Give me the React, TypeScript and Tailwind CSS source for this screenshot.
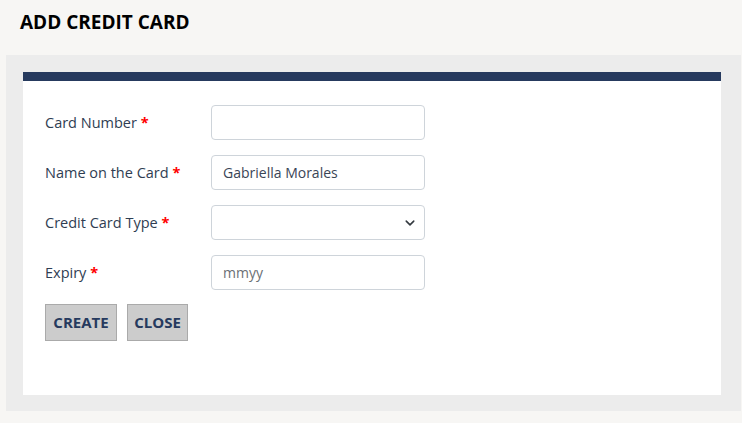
export default function App() {
  const rows = [
    { label: 'Card Number', kind: 'input', value: '', placeholder: '' },
    { label: 'Name on the Card', kind: 'input', value: 'Gabriella Morales', placeholder: '' },
    { label: 'Credit Card Type', kind: 'select', value: '', placeholder: '' },
    { label: 'Expiry', kind: 'input', value: '', placeholder: 'mmyy' },
  ]

  return (
    <div className="w-[742px] h-[423px] bg-[#f7f6f4] font-['Open_Sans',sans-serif] overflow-hidden">
      <h1 className="h-[55px] pl-[20px] pt-[9px] text-[19px] font-bold text-black leading-[26px]">ADD CREDIT CARD</h1>

      <div className="ml-[6px] mr-[1px] h-[356px] bg-[#ececec] pt-[17px] pl-[17px] pr-[20px]">
        <div className="h-[323px] bg-white border-t-[9px] border-[#263a5e] pt-[24px] pl-[22px]">
          <div className="flex flex-col gap-[15px]">
            {rows.map(r => (
              <div key={r.label} className="flex items-center h-[35px]">
                <label className="w-[166px] text-[14.5px] text-[#2f3d52]">
                  {r.label} <span className="text-[#ff0000] font-bold">*</span>
                </label>
                {r.kind === 'select' ? (
                  <div className="relative w-[214px] h-[35px]">
                    <select className="w-full h-full appearance-none border border-[#ced4da] rounded-[4px] bg-white px-3 text-[14px] text-[#333]">
                      <option></option>
                    </select>
                    <svg className="absolute right-[10px] top-[13px] w-[10px] h-[10px]" viewBox="0 0 16 16" fill="none">
                      <path d="M2 5l6 6 6-6" stroke="#343a40" strokeWidth="2.5" strokeLinecap="round" strokeLinejoin="round" />
                    </svg>
                  </div>
                ) : (
                  <input
                    readOnly
                    value={r.value}
                    placeholder={r.placeholder}
                    className="w-[214px] h-[35px] border border-[#ced4da] rounded-[4px] bg-white px-[11px] text-[14px] text-[#3a4556] placeholder:text-[#6b6f75] outline-none"
                  />
                )}
              </div>
            ))}
          </div>

          <div className="flex gap-[10px] mt-[14px]">
            <button className="w-[72px] h-[37px] bg-[#cccccc] border border-[#aaaaaa] text-[15px] font-bold text-[#263a5e]">CREATE</button>
            <button className="w-[61px] h-[37px] bg-[#cccccc] border border-[#aaaaaa] text-[15px] font-bold text-[#263a5e]">CLOSE</button>
          </div>
        </div>
      </div>
    </div>
  )
}
